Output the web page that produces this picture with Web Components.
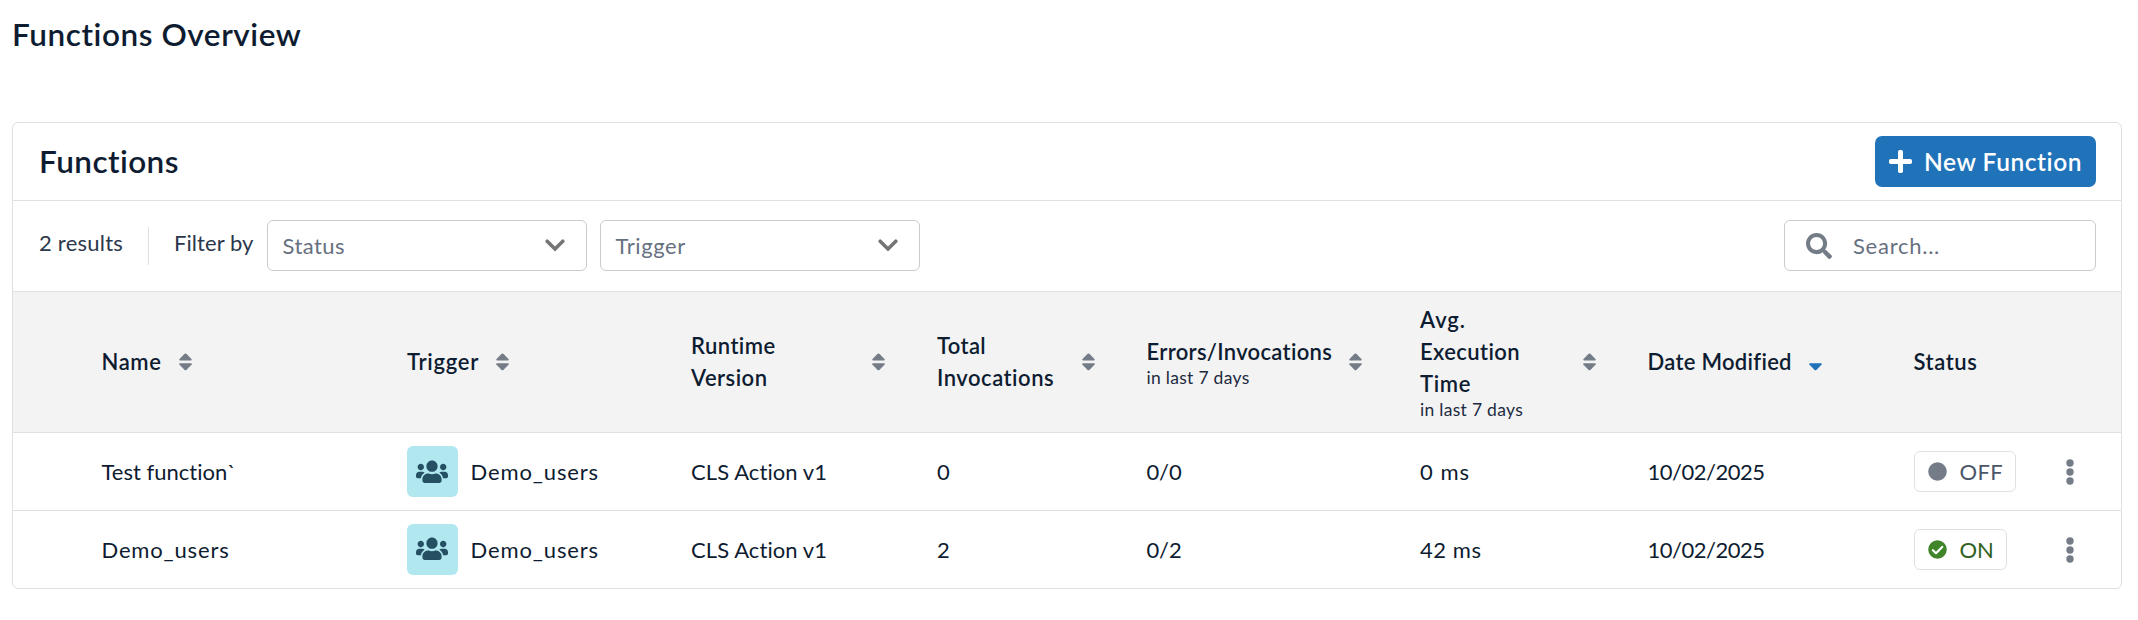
<!DOCTYPE html>
<html lang="en">
<head>
<meta charset="utf-8">
<title>Functions Overview</title>
<style>
  html, body { margin: 0; background: #fff; }
  body { font-family: Lato, "Open Sans", sans-serif; font-size: 22px; color: #0e1c31; }
</style>
</head>
<body>
<functions-page></functions-page>

<template id="page-tpl">
  <style>
    :host { display: block; box-sizing: border-box; width: 2138px; height: 620px; padding: 14px 16px 31px 12px; }
    h1 { margin: 0 0 68px; height: 40px; line-height: 40px; font-size: 31.5px; font-weight: 600; }
    .card { border: 1px solid #dfe0e1; border-radius: 6px; width: 2108px; }
    .head { display: flex; justify-content: space-between; align-items: center; height: 77px; padding: 0 25px 0 26px; border-bottom: 1px solid #dfe0e1; }
    h2 { margin: 0; padding-bottom: 2px; line-height: 40px; font-size: 31.5px; font-weight: 600; }
    .bar { display: flex; align-items: center; height: 90px; padding: 0 25px 0 26px; border-bottom: 1px solid #dfe0e1; }
    .lbl { padding-bottom: 6px; color: #2b384b; line-height: 32px; }
    .rule { width: 1px; height: 38px; background: #dfe0e1; margin: 0 25px; }
    .sel { margin: 0 0 1px 13px; }
    .spacer { flex: 1; }
  </style>
  <h1><fit-text w="290">Functions Overview</fit-text></h1>
  <div class="card">
    <div class="head"><h2><fit-text w="140.500">Functions</fit-text></h2><action-button>New Function</action-button></div>
    <div class="bar">
      <span class="lbl"><fit-text w="84">2 results</fit-text></span>
      <span class="rule"></span>
      <span class="lbl"><fit-text w="79.500">Filter by</fit-text></span>
      <filter-select class="sel" w="62.500">Status</filter-select>
      <filter-select class="sel" w="70.500">Trigger</filter-select>
      <span class="spacer"></span>
      <search-box style="margin-bottom:1px"></search-box>
    </div>
    <table-row head>
      <sort-header><fit-text w="60">Name</fit-text></sort-header>
      <sort-header><fit-text w="72">Trigger</fit-text></sort-header>
      <sort-header wide style="--pad:52px"><fit-text w="85">Runtime</fit-text><fit-text w="76.500">Version</fit-text></sort-header>
      <sort-header wide style="--pad:52px"><fit-text w="49">Total</fit-text><fit-text w="117.500">Invocations</fit-text></sort-header>
      <sort-header wide style="--pad:59px"><fit-text w="186">Errors/Invocations</fit-text><fit-text slot="note" w="103">in last 7 days</fit-text></sort-header>
      <sort-header wide style="--pad:52px"><fit-text w="46">Avg.</fit-text><fit-text w="100.500">Execution</fit-text><fit-text w="51">Time</fit-text><fit-text slot="note" w="103">in last 7 days</fit-text></sort-header>
      <sort-header desc><fit-text w="144">Date Modified</fit-text></sort-header>
      <sort-header none><fit-text w="64">Status</fit-text></sort-header>
      <span></span>
    </table-row>
    <table-row>
      <fit-text w="135">Test function`</fit-text>
      <trigger-cell><fit-text w="128.500">Demo_users</fit-text></trigger-cell>
      <fit-text w="136.500">CLS Action v1</fit-text>
      <fit-text w="14">0</fit-text>
      <fit-text w="35">0/0</fit-text>
      <fit-text w="50">0 ms</fit-text>
      <fit-text w="117">10/02/2025</fit-text>
      <status-pill state="off"><fit-text w="43.500">OFF</fit-text></status-pill>
      <row-menu></row-menu>
    </table-row>
    <table-row last>
      <fit-text w="128">Demo_users</fit-text>
      <trigger-cell style="--shift:1px"><fit-text w="128.500">Demo_users</fit-text></trigger-cell>
      <fit-text w="136.500">CLS Action v1</fit-text>
      <fit-text w="14">2</fit-text>
      <fit-text w="35">0/2</fit-text>
      <fit-text w="61.500">42 ms</fit-text>
      <fit-text w="117">10/02/2025</fit-text>
      <status-pill state="on"><fit-text w="34">ON</fit-text></status-pill>
      <row-menu></row-menu>
    </table-row>
  </div>
</template>

<script>
  const define = (name, html, ready) => customElements.define(name, class extends HTMLElement {
    connectedCallback() {
      if (this.shadowRoot) return;
      this.attachShadow({ mode: 'open' }).innerHTML = html;
      if (ready) ready(this);
    }
  });

  // A single-line label whose tracking is adjusted to a set advance width.
  define('fit-text', `
    <style>:host{display:block;white-space:nowrap} span{display:inline-block}</style>
    <span><slot></slot></span>`, el => {
    requestAnimationFrame(() => fit(el));
    fit(el);
  });
  function fit(el) {
    const span = el.shadowRoot.querySelector('span');
    const w = parseFloat(el.getAttribute('w'));
    const n = el.textContent.length;
    span.style.letterSpacing = '0px';
    const natural = span.getBoundingClientRect().width;
    if (w && n && natural) span.style.letterSpacing = ((w - natural) / n).toFixed(3) + 'px';
  }

  define('action-button', `
    <style>
      :host{display:block}
      button{all:unset;box-sizing:border-box;display:flex;align-items:center;width:221px;height:51px;padding-left:13.500px;border-radius:7px;background:#2072b9;color:#fff;font-size:24.500px;font-weight:600;line-height:52px}
      svg{display:block;margin-right:12.500px}
    </style>
    <button><svg width="23" height="23" viewBox="0 0 23 23" fill="#fff"><rect x="9" y="0" width="5" height="23" rx="1.700"/><rect x="0" y="9" width="23" height="5" rx="1.700"/></svg><fit-text w="158.500"></fit-text></button>`,
    el => {
      const t = el.shadowRoot.querySelector('fit-text');
      t.textContent = el.textContent;
    });

  define('filter-select', `
    <style>
      :host{display:block}
      .box{box-sizing:border-box;display:flex;align-items:center;justify-content:space-between;width:320px;height:51px;padding:0 21px 0 15px;border:1px solid #c9cbcd;border-radius:6px;background:#fff;color:#677080}
    </style>
    <div class="box"><fit-text></fit-text><svg width="20" height="13" viewBox="0 0 20 13" fill="none" stroke="#757575" stroke-width="3.600" stroke-linecap="round" stroke-linejoin="miter"><path d="M2.200 2.200 10 10 17.800 2.200"/></svg></div>`,
    el => {
      const t = el.shadowRoot.querySelector('fit-text');
      t.textContent = el.textContent;
      t.setAttribute('w', el.getAttribute('w'));
      fit(t);
    });

  define('search-box', `
    <style>
      :host{display:block}
      .box{box-sizing:border-box;display:flex;align-items:center;width:312px;height:51px;padding-left:21px;border:1px solid #c9cbcd;border-radius:6px;color:#677080}
      svg{margin-right:21px}
    </style>
    <div class="box"><svg width="26" height="26" viewBox="0 0 512 512" fill="#747d87"><path d="M505 442.700L405.300 343c-4.500-4.500-10.600-7-17-7H372c27.600-35.300 44-79.700 44-128C416 93.100 322.900 0 208 0S0 93.100 0 208s93.100 208 208 208c48.300 0 92.700-16.400 128-44v16.300c0 6.400 2.500 12.500 7 17l99.700 99.700c9.400 9.400 24.600 9.400 33.900 0l28.300-28.300c9.400-9.400 9.400-24.600.1-34zM208 336c-70.700 0-128-57.200-128-128 0-70.700 57.200-128 128-128 70.700 0 128 57.200 128 128 0 70.700-57.200 128-128 128z"/></svg><fit-text w="87">Search...</fit-text></div>`);

  define('table-row', `
    <style>
      :host{display:grid;grid-template-columns:305.500px 284px 246px 209.500px 273.500px 227.500px 266px 152px 1fr;align-items:center;height:77px;padding-left:88.500px;border-bottom:1px solid #dfe0e1;line-height:30px}
      :host([head]){height:140px;background:#f3f3f3;font-weight:600;line-height:32px}
      :host([last]){border-bottom:0}
    </style>
    <slot></slot>`);

  define('sort-header', `
    <style>
      :host{display:flex;align-items:center;gap:17px}
      :host([wide]){justify-content:space-between;padding-right:var(--pad)}
      svg{display:block;flex:none}
      .note{font-size:17.500px;font-weight:400;line-height:20px;color:#1c2a3f}
      :host([none]) svg, :host([desc]) .up{display:none}
      svg{fill:#747d87}
      :host([desc]) svg{fill:#2072b9}
    </style>
    <div><slot></slot><div class="note"><slot name="note"></slot></div></div>
    <svg width="13" height="18" viewBox="0 0 13 18"><path class="up" d="M1 7.400Q0 7.400.3 6.300L5.600.8Q6.500 0 7.400.8L12.700 6.300Q13 7.400 12 7.400Z"/><path d="M1 10.300Q0 10.300.3 11.400L5.600 16.900Q6.500 17.700 7.400 16.900L12.700 11.400Q13 10.300 12 10.300Z"/></svg>`);

  define('trigger-cell', `
    <style>
      :host{display:flex;align-items:center;gap:12.500px}
      .tile{box-sizing:border-box;display:flex;align-items:center;justify-content:center;width:51px;height:51px;padding-right:1px;border-radius:6px;background:#b1e7ef}
      svg{display:block;margin-bottom:calc(var(--shift,0px)*2)}
    </style>
    <span class="tile"><svg width="32" height="25.600" viewBox="0 0 640 512" fill="#255063"><path d="M96 224c35.300 0 64-28.700 64-64s-28.700-64-64-64-64 28.700-64 64 28.700 64 64 64zm448 0c35.300 0 64-28.700 64-64s-28.700-64-64-64-64 28.700-64 64 28.700 64 64 64zm32 32h-64c-17.600 0-33.500 7.100-45.100 18.600 40.300 22.100 68.900 62 75.100 109.400h66c17.700 0 32-14.300 32-32v-32c0-35.300-28.700-64-64-64zm-256 0c61.900 0 112-50.100 112-112S381.900 32 320 32 208 82.100 208 144s50.100 112 112 112zm76.800 32h-8.300c-20.800 10-43.900 16-68.500 16s-47.600-6-68.500-16h-8.300C179.600 288 128 339.600 128 403.200V432c0 26.500 21.500 48 48 48h288c26.500 0 48-21.500 48-48v-28.800c0-63.600-51.600-115.200-115.200-115.200zm-223.700-13.400C161.500 263.100 145.600 256 128 256H64c-35.300 0-64 28.700-64 64v32c0 17.700 14.300 32 32 32h65.900c6.300-47.400 34.900-87.300 75.200-109.400z"/></svg></span><slot></slot>`);

  define('status-pill', `
    <style>
      :host{display:block;justify-self:start}
      .pill{box-sizing:border-box;display:flex;align-items:center;gap:13px;width:102.500px;height:41px;padding-left:13px;border:1px solid #dfe0e1;border-radius:6px;color:#4b5668;background:#fff}
      :host([state=on]) .pill{width:93.500px;color:#2f611d}
      svg{display:block;fill:#747d87}
      :host([state=on]) svg{fill:#40852a}
      path{display:none;fill:none;stroke:#fff;stroke-width:2.200;stroke-linecap:round;stroke-linejoin:round}
      :host([state=on]) path{display:inline}
    </style>
    <span class="pill"><svg width="19" height="19" viewBox="0 0 19 19"><circle cx="9.500" cy="9.500" r="9.300"/><path d="M4.900 10.200 8 13.200 14.200 6.900"/></svg><slot></slot></span>`);

  define('row-menu', `
    <style>:host{display:block} svg{display:block;fill:#747d87}</style>
    <svg width="8" height="26" viewBox="0 0 8 26"><circle cx="4" cy="4" r="3.700"/><circle cx="4" cy="13" r="3.700"/><circle cx="4" cy="22" r="3.700"/></svg>`);

  define('functions-page', document.getElementById('page-tpl').innerHTML, el => {
    el.shadowRoot.querySelectorAll('fit-text').forEach(fit);
  });
</script>
</body>
</html>
